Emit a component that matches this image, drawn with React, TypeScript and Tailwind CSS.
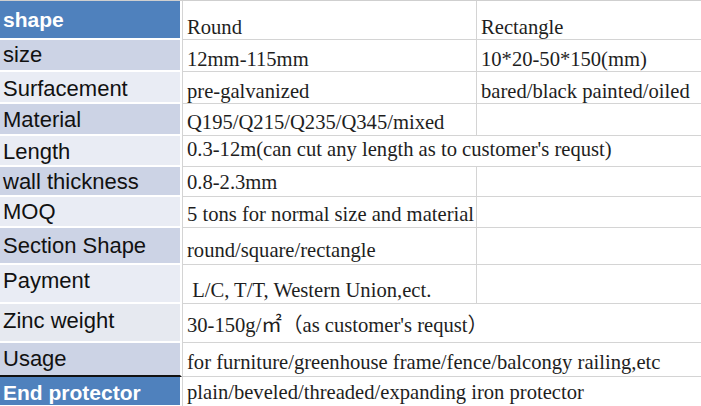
import React from 'react';

type Row = {
  label: string;
  h: string;
  band: string;
  a: string;
  b?: string;
  span?: boolean;
  pb: string;
  lp?: string;
  head?: boolean;
  bottom?: string;
};

const rows: Row[] = [
  { label: 'shape', h: 'h-[39px]', band: 'bg-[#4f81bd]', a: 'Round', b: 'Rectangle', pb: 'pb-[1px]', head: true },
  { label: 'size', h: 'h-[32px]', band: 'bg-[#ccd3e5]', a: '12mm-115mm', b: '10*20-50*150(mm)', pb: 'pb-[1px]' },
  { label: 'Surfacement', h: 'h-[32px]', band: 'bg-[#e9ecf4]', a: 'pre-galvanized', b: 'bared/black painted/oiled', pb: 'pb-[1px]', lp: 'pt-[3px]' },
  { label: 'Material', h: 'h-[32px]', band: 'bg-[#ccd3e5]', a: 'Q195/Q215/Q235/Q345/mixed', b: '', pb: 'pb-[2px]', lp: 'pt-[2px]' },
  { label: 'Length', h: 'h-[31px]', band: 'bg-[#e9ecf4]', a: "0.3-12m(can cut any length as to customer's requst)", span: true, pb: 'pb-[6px]', lp: 'pt-[3px]' },
  { label: 'wall thickness', h: 'h-[30px]', band: 'bg-[#ccd3e5]', a: '0.8-2.3mm', b: '', pb: 'pb-[3px]', lp: 'pt-[2px]' },
  { label: 'MOQ', h: 'h-[31px]', band: 'bg-[#e9ecf4]', a: '5 tons for normal size and material', b: '', pb: 'pb-[2px]' },
  { label: 'Section Shape', h: 'h-[37px]', band: 'bg-[#ccd3e5]', a: 'round/square/rectangle', b: '', pb: 'pb-[3px]' },
  { label: 'Payment', h: 'h-[39px]', band: 'bg-[#e9ecf4]', a: '\u00a0L/C, T/T, Western Union,ect.', b: '', pb: 'pb-[2px]', lp: 'pb-[5px]' },
  { label: 'Zinc weight', h: 'h-[39px]', band: 'bg-[#e6e9f0]', a: "30-150g/㎡（as customer's requst）", span: true, pb: 'pb-[6px]', lp: 'pb-[4px]' },
  { label: 'Usage', h: 'h-[34px]', band: 'bg-[#ccd3e5]', a: 'for furniture/greenhouse frame/fence/balcongy railing,etc', span: true, pb: 'pb-[3px]', bottom: 'border-b-2 border-[#111]' },
  { label: 'End protector', h: 'h-[30px]', band: 'bg-[#4f81bd]', a: 'plain/beveled/threaded/expanding iron protector', span: true, pb: 'pb-[3px]', head: true, lp: 'pt-[2px]' },
];

const serif = "font-['Liberation_Serif','Noto_Sans_CJK_SC',serif]";

export default function App() {
  return (
    <div className="w-[701px] h-[406px] overflow-hidden bg-white border-t border-[#cfcfcf]">
      {rows.map((r) => (
        <div key={r.label} className={`flex ${r.h}`}>
          <div className={`w-[182px] shrink-0 flex items-center pl-[3px] ${r.lp ?? ''} ${r.band} ${r.bottom ?? 'border-b-2 border-white'} border-r-2 border-r-white font-['Liberation_Sans',sans-serif] leading-none ${r.head ? 'text-white font-bold text-[21px]' : 'text-[#111] text-[22px]'}`}>
            {r.label}
          </div>
          <div className={`flex-1 flex border-b border-[#d4d4d4] border-l border-l-[#d4d4d4] ${serif} text-[20.6px] leading-none text-[#1e1e1e]`}>
            {r.span ? (
              <div className={`flex-1 flex items-end pl-[4px] whitespace-nowrap ${r.pb}`}>{r.a}</div>
            ) : (
              <>
                <div className={`w-[294px] shrink-0 flex items-end pl-[4px] whitespace-nowrap border-r border-[#d4d4d4] ${r.pb}`}>{r.a}</div>
                <div className={`flex-1 flex items-end pl-[4px] whitespace-nowrap ${r.pb}`}>{r.b}</div>
              </>
            )}
          </div>
        </div>
      ))}
    </div>
  );
}
